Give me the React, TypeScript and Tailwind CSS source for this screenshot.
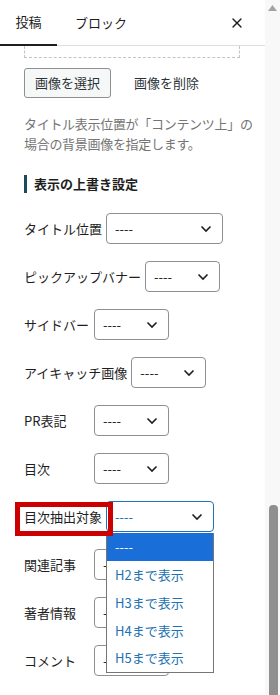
import { X } from "lucide-react";

type Row = { label: string; width: number; focused?: boolean };

const rows: Row[] = [
  { label: "タイトル位置", width: 117 },
  { label: "ピックアップバナー", width: 75 },
  { label: "サイドバー", width: 75 },
  { label: "アイキャッチ画像", width: 75 },
  { label: "PR表記", width: 75 },
  { label: "目次", width: 75 },
  { label: "目次抽出対象", width: 108, focused: true },
  { label: "関連記事", width: 75 },
  { label: "著者情報", width: 75 },
  { label: "コメント", width: 75 },
];

const options = ["----", "H2まで表示", "H3まで表示", "H4まで表示", "H5まで表示"];

function Chevron() {
  return (
    <svg width="12" height="8" viewBox="0 0 12 8" className="shrink-0">
      <path d="M1.5 1.5 L6 6 L10.5 1.5" fill="none" stroke="#1e1e1e" strokeWidth="1.6" />
    </svg>
  );
}

function Select({ width, focused }: { width: number; focused?: boolean }) {
  return (
    <div
      className={`relative h-[31px] flex items-center justify-between pl-[8px] pr-[10px] rounded-[4px] bg-white border ${
        focused ? "border-[#2271b1]" : "border-[#8c8f94]"
      }`}
      style={{ width }}
    >
      <span className={`text-[13px] ${focused ? "text-[#2271b1]" : "text-[#1e1e1e]"}`}>----</span>
      <Chevron />
      {focused && (
        <div className="absolute left-[-1px] top-[31px] w-[108px] z-20 bg-white border border-[#767676] border-t-0">
          {options.map((o, i) => (
            <div
              key={o}
              className={`h-[27.8px] flex items-center pl-[8px] text-[13px] ${
                i === 0 ? "bg-[#1a6ed8] text-white" : "text-[#2271b1]"
              }`}
            >
              {o}
            </div>
          ))}
        </div>
      )}
    </div>
  );
}

export default function App() {
  return (
    <div
      className="w-[280px] h-[695px] flex overflow-hidden bg-white"
      style={{ fontFamily: '"Noto Sans CJK JP", "Noto Sans", sans-serif' }}
    >
      <div className="w-[265px] flex flex-col">
        <div className="h-[46px] shrink-0 flex items-stretch border-b border-[#dddddd]">
          <div className="w-[57px] flex items-center justify-center text-[13px] text-[#1e1e1e] border-b-[2px] border-[#1e1e1e] -mb-px">
            投稿
          </div>
          <div className="px-[18px] flex items-center text-[13px] text-[#1e1e1e]">ブロック</div>
          <div className="flex-1" />
          <div className="w-[48px] flex items-center justify-center pr-[8px] text-[#1e1e1e]">
            <X size={16} strokeWidth={2} />
          </div>
        </div>

        <div className="px-[24px] flex flex-col">
          <div className="w-[216px] h-[12px] border border-t-0 border-dashed border-[#c3c4c7]" />

          <div className="mt-[10px] flex items-center gap-[23px]">
            <div className="h-[30px] px-[10px] flex items-center rounded-[3px] border border-[#8c8f94] bg-[#f6f7f7] text-[13px] text-[#2c3338]">
              画像を選択
            </div>
            <span className="text-[13px] text-[#2c3338]">画像を削除</span>
          </div>

          <p className="mt-[16px] text-[13px] leading-[20px] text-[#757575] whitespace-nowrap tracking-[-0.3px]">
            タイトル表示位置が「コンテンツ上」の
            <br />
            場合の背景画像を指定します。
          </p>

          <div className="mt-[21px] h-[18px] flex items-center border-l-[3px] border-[#1d4b5a] pl-[7px] text-[13px] font-bold text-[#1e1e1e]">
            表示の上書き設定
          </div>

          <div className="mt-[20px] flex flex-col gap-[17px]">
            {rows.map((r) => (
              <div key={r.label} className="relative flex items-center h-[31px]">
                <span className="min-w-[66px] mr-[4px] text-[13px] text-[#1e1e1e] whitespace-nowrap relative z-10">
                  {r.label}
                </span>
                {r.focused && (
                  <div className="absolute left-[-9px] top-[1px] w-[98px] h-[34px] border-[5px] border-[#cc0000] z-30 pointer-events-none" />
                )}
                <Select width={r.width} focused={r.focused} />
              </div>
            ))}
            <div className="flex items-center h-[20px]">
              <div className="ml-[2px] w-[14px] h-[14px] rounded-[2px] border border-[#757575]" />
            </div>
          </div>
        </div>
      </div>

      <div className="w-[15px] bg-[#f8f8f8] flex flex-col items-center">
        <svg width="9" height="6" viewBox="0 0 9 6" className="mt-[5px]">
          <path d="M4.5 0 L9 6 L0 6 Z" fill="#a3a3a3" />
        </svg>
        <div className="flex-1" />
        <div className="w-[9px] h-[190px] ml-[1px] bg-[#8f8f8f] rounded-t-[4px]" />
      </div>
    </div>
  );
}
